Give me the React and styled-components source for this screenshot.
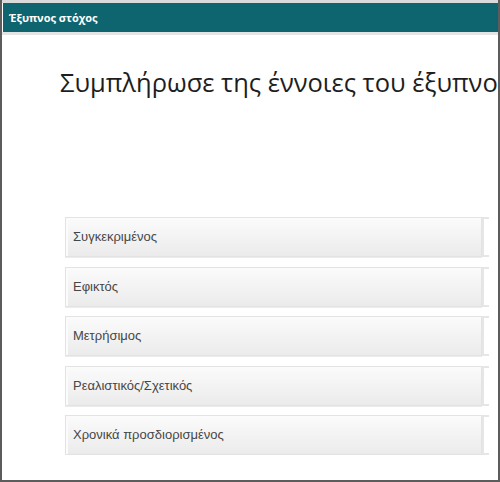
import React from "react";
import styled, { createGlobalStyle } from "styled-components";

const Global = createGlobalStyle`
  html, body { margin: 0; padding: 0; background: #ffffff; }
  * { box-sizing: border-box; }
`;

const Frame = styled.div`
  width: 500px;
  height: 482px;
  border-left: 2px solid #5c5c5c;
  border-right: 2px solid #5c5c5c;
  border-bottom: 2px solid #5c5c5c;
  background: #ffffff;
  overflow: hidden;
  display: flex;
  flex-direction: column;
`;

const HeaderWrap = styled.div`
  padding-top: 3px;
  padding-bottom: 3px;
  padding-left: 1px;
  background: linear-gradient(#dadada 0 3px, #ffffff 3px calc(100% - 3px), #e4e4e4 calc(100% - 3px));
`;

const Header = styled.div`
  height: 29px;
  background: #0e6570;
  color: #ffffff;
  font-family: "Open Sans", "Noto Sans", sans-serif;
  font-weight: 700;
  font-size: 11px;
  display: flex;
  align-items: center;
  padding-left: 6px;
`;

const Content = styled.div`
  flex: 1;
  overflow: hidden;
  padding-left: 58px;
`;

const Title = styled.h1`
  margin: 29px 0 0 0;
  font-family: "Open Sans", "Noto Sans", sans-serif;
  font-weight: 400;
  font-size: 25.5px;
  line-height: 36px;
  color: #1e1e1e;
  white-space: nowrap;
`;

const List = styled.div`
  margin-top: 117px;
  margin-left: 5px;
  width: 424px;
  overflow: hidden;
  display: flex;
  flex-direction: column;
  gap: 9.5px;
`;

const Row = styled.div`
  display: flex;
  height: 40px;
`;

const Label = styled.div`
  flex: 0 0 417px;
  height: 40px;
  border: 1px solid #e3e3e3;
  box-shadow: inset 2px 2px 0 #fbfbfb, 0 1px 0 #ececec;
  background: linear-gradient(#fbfbfb, #ebebeb);
  font-family: "Liberation Sans", Arial, sans-serif;
  font-size: 13px;
  color: #464646;
  display: flex;
  align-items: center;
  padding-left: 7px;
  padding-bottom: 1px;
`;

const Slot = styled.div`
  flex: 0 0 40px;
  height: 40px;
  border: 2px solid #e6e6e6;
  background: #ffffff;
`;

const items = [
  "Συγκεκριμένος",
  "Εφικτός",
  "Μετρήσιμος",
  "Ρεαλιστικός/Σχετικός",
  "Χρονικά προσδιορισμένος",
];

export default function App() {
  return (
    <>
      <Global />
      <Frame>
        <HeaderWrap>
          <Header>Έξυπνος στόχος</Header>
        </HeaderWrap>
        <Content>
          <Title>Συμπλήρωσε της έννοιες του έξυπνου στόχου</Title>
          <List>
            {items.map((t) => (
              <Row key={t}>
                <Label>{t}</Label>
                <Slot />
              </Row>
            ))}
          </List>
        </Content>
      </Frame>
    </>
  );
}
